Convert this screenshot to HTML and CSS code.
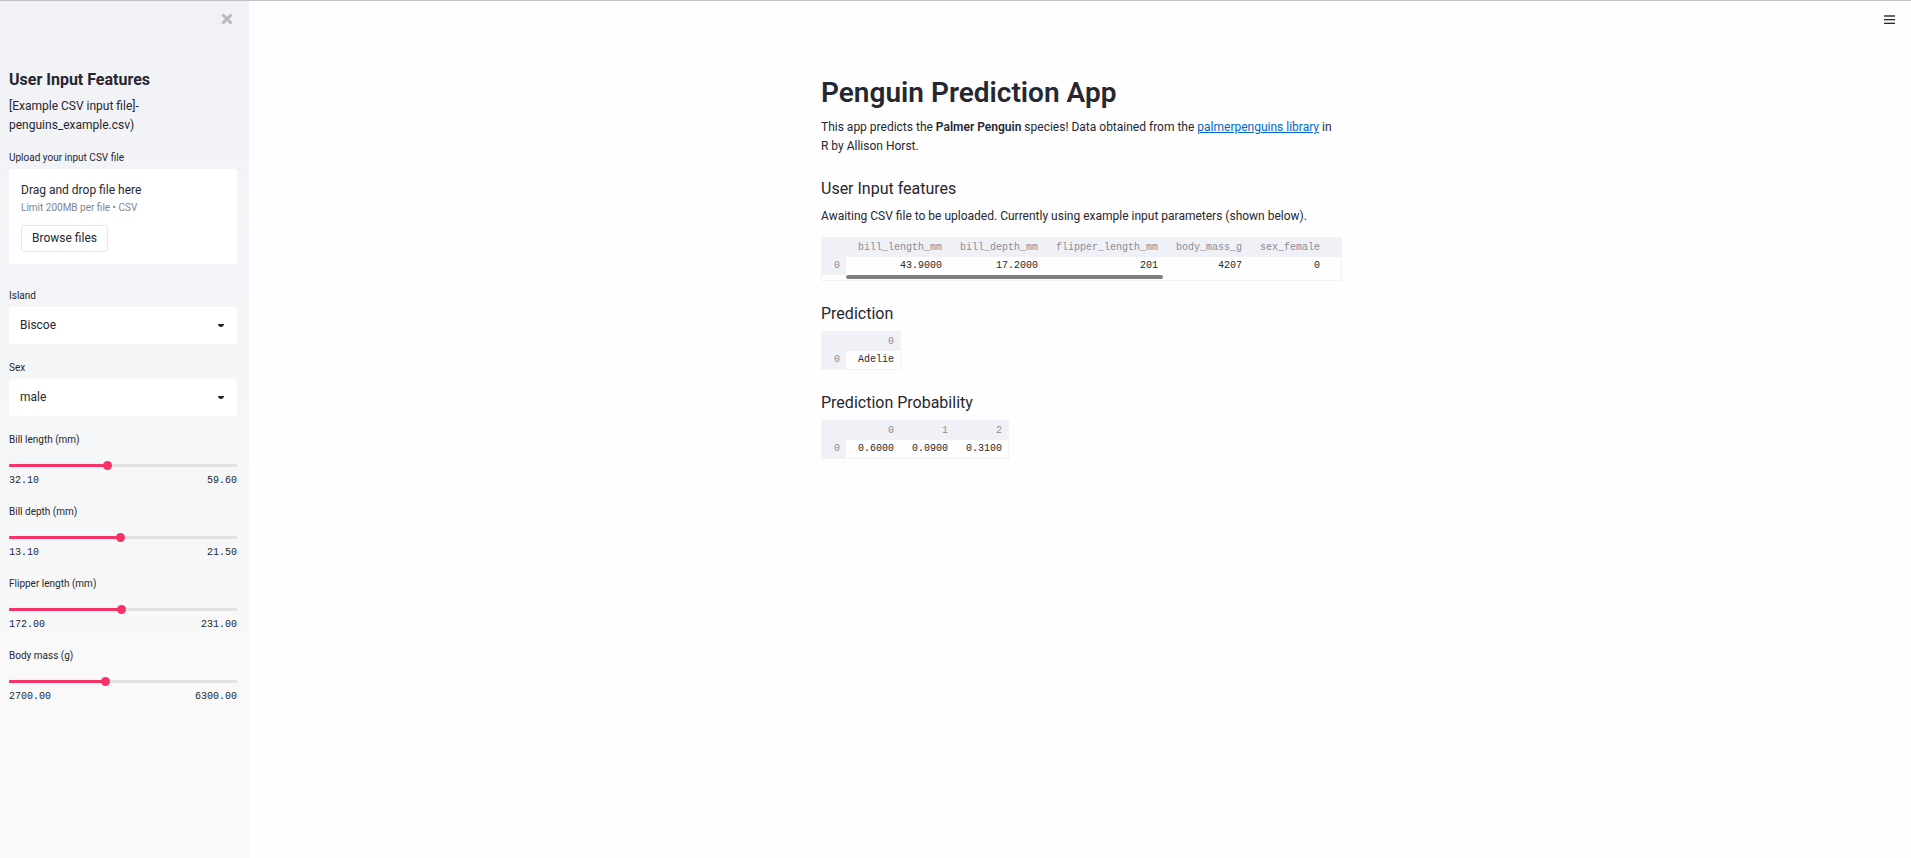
FILE: index.html
```html
<!DOCTYPE html>
<html lang="en">
<head>
<meta charset="utf-8">
<title>Penguin Prediction App</title>
<link rel="stylesheet" href="styles.css">
</head>
<body>
<div class="app">
  <aside class="sidebar">
    <div class="sidebar-top">
      <button class="icon-button close" type="button" aria-label="Close sidebar">
        <svg width="12" height="12" viewBox="0 0 12 12"><path d="M2.5 2.5 9.5 9.5M9.5 2.5 2.5 9.5" fill="none" stroke="currentColor" stroke-width="3" stroke-linecap="square"/></svg>
      </button>
    </div>
    <h2 class="sidebar-title">User Input Features</h2>
    <p class="text sidebar-text">[Example CSV input file]-<br>penguins_example.csv)</p>

    <div class="widget upload">
      <label class="label" for="browse">Upload your input CSV file</label>
      <div class="dropzone">
        <div class="drop-title">Drag and drop file here</div>
        <div class="drop-limit">Limit 200MB per file • CSV</div>
        <button class="browse" id="browse" type="button">Browse files</button>
      </div>
    </div>

    <div class="widget">
      <label class="label" for="island">Island</label>
      <div class="select-box">
        <select class="select" id="island"><option>Biscoe</option><option>Dream</option><option>Torgersen</option></select>
        <svg class="caret" width="6" height="3" viewBox="0 0 6 3"><path d="M0 0h6v1L4 3H2L0 1z" fill="currentColor"/></svg>
      </div>
    </div>
    <div class="widget">
      <label class="label" for="sex">Sex</label>
      <div class="select-box">
        <select class="select" id="sex"><option>male</option><option>female</option></select>
        <svg class="caret" width="6" height="3" viewBox="0 0 6 3"><path d="M0 0h6v1L4 3H2L0 1z" fill="currentColor"/></svg>
      </div>
    </div>

    <div class="widget">
      <label class="label" for="bill-length">Bill length (mm)</label>
      <input class="slider" id="bill-length" type="range" min="32.1" max="59.6" step="0.1" value="43.9" style="--fill: 43%">
      <div class="range"><span>32.10</span><span>59.60</span></div>
    </div>
    <div class="widget">
      <label class="label" for="bill-depth">Bill depth (mm)</label>
      <input class="slider" id="bill-depth" type="range" min="13.1" max="21.5" step="0.1" value="17.2" style="--fill: 49%">
      <div class="range"><span>13.10</span><span>21.50</span></div>
    </div>
    <div class="widget">
      <label class="label" for="flipper">Flipper length (mm)</label>
      <input class="slider" id="flipper" type="range" min="172" max="231" value="201" style="--fill: 49%">
      <div class="range"><span>172.00</span><span>231.00</span></div>
    </div>
    <div class="widget">
      <label class="label" for="mass">Body mass (g)</label>
      <input class="slider" id="mass" type="range" min="2700" max="6300" value="4207" style="--fill: 42%">
      <div class="range"><span>2700.00</span><span>6300.00</span></div>
    </div>
  </aside>

  <div class="page">
    <header class="toolbar">
      <button class="icon-button menu" type="button" aria-label="Menu">
        <svg width="11" height="9" viewBox="0 0 11 9"><path d="M0 0h11v2H0z" fill="#6b6572"/><path d="M0 4h11v1H0zM0 8h11v1H0z" fill="#262730"/><path d="M0 5h11v1H0zM0 7h11v1H0z" fill="#b9b7bf"/></svg>
      </button>
    </header>
    <main class="content">
      <h1 class="title">Penguin Prediction App</h1>
      <p class="text">This app predicts the <strong>Palmer Penguin</strong> species! Data obtained from the <a href="#">palmerpenguins library</a> in R by Allison Horst.</p>

      <h2 class="heading">User Input features</h2>
      <p class="text">Awaiting CSV file to be uploaded. Currently using example input parameters (shown below).</p>
      <div class="frame wide">
        <table class="data">
          <colgroup><col class="c-index"><col class="c-length"><col class="c-depth"><col class="c-flipper"><col class="c-mass"><col class="c-sex"><col></colgroup>
          <thead><tr><th></th><th>bill_length_mm</th><th>bill_depth_mm</th><th>flipper_length_mm</th><th>body_mass_g</th><th>sex_female</th><th></th></tr></thead>
          <tbody><tr><th>0</th><td>43.9000</td><td>17.2000</td><td>201</td><td>4207</td><td>0</td><td></td></tr></tbody>
        </table>
        <div class="scroll"><div class="scroll-thumb"></div></div>
      </div>

      <h2 class="heading">Prediction</h2>
      <div class="frame">
        <table class="data">
          <colgroup><col class="c-index"><col class="c-value"></colgroup>
          <thead><tr><th></th><th>0</th></tr></thead>
          <tbody><tr><th>0</th><td>Adelie</td></tr></tbody>
        </table>
      </div>

      <h2 class="heading">Prediction Probability</h2>
      <div class="frame">
        <table class="data">
          <colgroup><col class="c-index"><col class="c-value"><col class="c-value"><col class="c-value"></colgroup>
          <thead><tr><th></th><th>0</th><th>1</th><th>2</th></tr></thead>
          <tbody><tr><th>0</th><td>0.6000</td><td>0.0900</td><td>0.3100</td></tr></tbody>
        </table>
      </div>
    </main>
  </div>
</div>
</body>
</html>
```
FILE: styles.css
```css
* { box-sizing: border-box; }

body {
  margin: 0;
  color: #262730;
  background: #fefefe;
  font: 12px/19px Roboto, "Liberation Sans", sans-serif;
}

h1, h2, p { margin: 0; }

.app {
  display: flex;
  min-height: 100vh;
  border-top: 1px solid #c3c1c5;
}

.sidebar {
  flex: none;
  width: 249px;
  padding: 0 12px 24px 9px;
  background: linear-gradient(#f0f2f6, #f9f9f9 84%);
}

.sidebar-top {
  display: flex;
  justify-content: flex-end;
  padding: 12px 4px 0 0;
  height: 67px;
}

.icon-button {
  display: block;
  height: 12px;
  padding: 0;
  border: 0;
  background: none;
  line-height: 0;
  cursor: pointer;
}

.close { color: #bbb7c2; }

.sidebar-title {
  font-size: 16px;
  font-weight: 700;
  line-height: 24px;
}

.sidebar-text { margin: 5px 0 15px; }

.widget { margin-bottom: 16px; }
.upload { margin-bottom: 24px; }

.label {
  display: block;
  margin-bottom: 3px;
  font-size: 10px;
  line-height: 16px;
}

.dropzone {
  padding: 12px;
  border-radius: 3px;
  background: #fff;
}

.drop-limit {
  color: #808495;
  font-size: 10px;
  line-height: 16px;
}

.browse {
  height: 27px;
  margin-top: 9px;
  padding: 0 10px;
  border: 1px solid #e6e6ed;
  border-radius: 3px;
  color: inherit;
  background: #fff;
  font: inherit;
}

.select-box {
  display: grid;
  align-items: center;
}

.select, .caret { grid-area: 1 / 1; }

.select {
  appearance: none;
  width: 100%;
  height: 37px;
  padding: 0 11px;
  border: 0;
  border-radius: 3px;
  color: inherit;
  background: #fff;
  font: inherit;
}

.caret {
  justify-self: end;
  margin-right: 13px;
  pointer-events: none;
}

.slider {
  appearance: none;
  display: block;
  width: 100%;
  height: 15px;
  margin: 10px 0 0;
  background: none;
}

.slider::-webkit-slider-runnable-track {
  height: 3px;
  border-radius: 1px;
  background: linear-gradient(90deg, #f63366 var(--fill), #e1e1e1 var(--fill));
}

.slider::-webkit-slider-thumb {
  appearance: none;
  width: 9px;
  height: 9px;
  margin-top: -3px;
  border-radius: 50%;
  background: #f63366;
}

.range {
  display: flex;
  justify-content: space-between;
  font: 10px/15px "Liberation Mono", monospace;
}

.page {
  flex: 1;
  min-width: 0;
  padding-left: 3px;
}

.toolbar {
  display: flex;
  justify-content: flex-end;
  height: 75px;
  padding: 12px 16px 0 0;
}

.content {
  width: 100%;
  max-width: 521px;
  margin: 0 auto;
}

.title {
  margin-bottom: 8px;
  font-size: 28px;
  font-weight: 600;
  line-height: 34px;
}

.content .text { padding-right: 6px; }
.text strong { font-weight: 600; }
.text a { color: #0068c9; }

.heading {
  margin: 21px 0 5px;
  font-size: 16px;
  font-weight: 400;
  line-height: 24px;
}

.heading + .text { margin-top: 6px; }

.frame {
  width: fit-content;
  border: 1px solid #f0f2f6;
}

.wide {
  width: 100%;
  margin-top: 11px;
}

.data {
  table-layout: fixed;
  border-collapse: collapse;
  font: 10px/18px "Liberation Mono", monospace;
}

.wide .data { width: 100%; }

.data th, .data td {
  padding: 0 6px 0 0;
  text-align: right;
  font-weight: 400;
}

.data thead th { padding-top: 1px; }

.data th {
  color: #8b8a99;
  background: #f0f1f6;
}

.c-index { width: 24px; }
.c-length { width: 102px; }
.c-depth { width: 96px; }
.c-flipper { width: 120px; }
.c-mass { width: 84px; }
.c-sex { width: 78px; }
.c-value { width: 54px; }

.scroll {
  height: 5px;
  padding-left: 24px;
}

.scroll-thumb {
  width: 64%;
  height: 4px;
  border-radius: 2px;
  background: #808080;
}
```
